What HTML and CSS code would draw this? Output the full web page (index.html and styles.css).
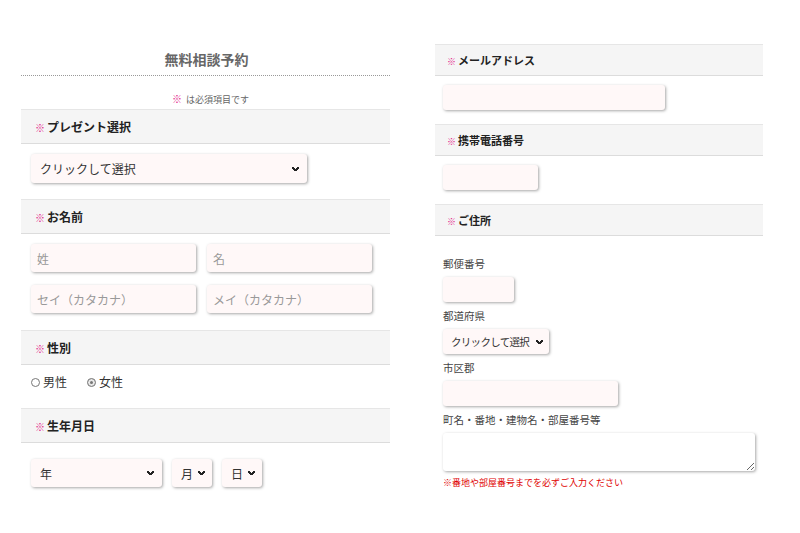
FILE: index.html
```html
<!DOCTYPE html>
<html lang="ja">
<head>
<meta charset="utf-8">
<link rel="stylesheet" href="styles.css">
</head>
<body>
<div class="page">
  <div class="col-left">
    <h1 class="title">無料相談予約</h1>
    <p class="note"><span class="req">※</span> は必須項目です</p>

    <div class="head"><span class="req">※</span>プレゼント選択</div>
    <div class="field f-present">
      <select class="sel sel-present"><option>クリックして選択</option></select>
    </div>

    <div class="head"><span class="req">※</span>お名前</div>
    <div class="field f-name">
      <div class="row"><input class="inp w-half" placeholder="姓"><input class="inp w-half" placeholder="名"></div>
      <div class="row"><input class="inp w-half" placeholder="セイ（カタカナ）"><input class="inp w-half" placeholder="メイ（カタカナ）"></div>
    </div>

    <div class="head"><span class="req">※</span>性別</div>
    <div class="field f-gender">
      <label class="radio"><input type="radio" name="g">男性</label>
      <label class="radio"><input type="radio" name="g" checked>女性</label>
    </div>

    <div class="head"><span class="req">※</span>生年月日</div>
    <div class="field f-birth">
      <select class="sel sel-year"><option>年</option></select>
      <select class="sel sel-md"><option>月</option></select>
      <select class="sel sel-md"><option>日</option></select>
    </div>
  </div>

  <div class="col-right">
    <div class="head head-r"><span class="req">※</span>メールアドレス</div>
    <div class="field-r">
      <input class="inp inp-r w-mail">
    </div>

    <div class="head head-r"><span class="req">※</span>携帯電話番号</div>
    <div class="field-r">
      <input class="inp inp-r w-tel">
    </div>

    <div class="head head-r"><span class="req">※</span>ご住所</div>
    <div class="field-addr">
      <label class="lbl">郵便番号</label>
      <input class="inp inp-r w-zip">
      <label class="lbl">都道府県</label>
      <select class="sel sel-r w-pref"><option>クリックして選択</option></select>
      <label class="lbl">市区郡</label>
      <input class="inp inp-r w-city">
      <label class="lbl">町名・番地・建物名・部屋番号等</label>
      <textarea class="area"></textarea>
      <p class="warn">※番地や部屋番号までを必ずご入力ください</p>
    </div>
  </div>
</div>
</body>
</html>
```

FILE: styles.css
```css
* { box-sizing: border-box; }
body {
  margin: 0;
  background: #fff;
  font-family: "Noto Sans CJK JP", "Noto Sans", sans-serif;
  color: #333;
}
.page {
  display: flex;
  align-items: flex-start;
  gap: 45px;
  padding-left: 21px;
}
.col-left { width: 369px; padding-top: 49px; }
.col-right { width: 328px; padding-top: 44px; }

.title {
  margin: 0;
  font-size: 14px;
  line-height: 20px;
  font-weight: bold;
  color: #666;
  text-align: center;
  padding-bottom: 6px;
  border-bottom: 1px dotted #999;
  padding-left: 2px;
}
.note {
  margin: 16px 0 2px;
  font-size: 9px;
  line-height: 14px;
  color: #666;
  text-align: center;
  padding-left: 10px;
}
.req { color: #e31c8a; font-size: 10px; margin-right: 2px; font-weight: normal; }

.head {
  height: 35px;
  line-height: 33px;
  background: #f5f5f5;
  border-top: 1px solid #e6e6e6;
  border-bottom: 1px solid #dcdcdc;
  padding-left: 14px;
  font-size: 12px;
  font-weight: bold;
  color: #222;
}
.head-r {
  height: 32px;
  line-height: 30px;
  padding-left: 12px;
  font-size: 11px;
}
.head-r .req { font-size: 9px; }

.inp, .sel, .area {
  font-family: inherit;
  border: none;
  border-radius: 3px;
  background-color: #fff8f8;
  box-shadow: 1px 1px 3px rgba(0, 0, 0, 0.35);
  color: #333;
  outline: none;
}
.inp {
  height: 28px;
  padding: 0 6px;
  font-size: 12px;
}
.inp::placeholder { color: #999; }
.sel {
  -webkit-appearance: none;
  appearance: none;
  height: 29px;
  font-size: 12px;
  padding: 0 20px 0 9px;
  background-image:
    linear-gradient(45deg, transparent 36%, #222 36%, #222 64%, transparent 64%),
    linear-gradient(135deg, transparent 36%, #222 36%, #222 64%, transparent 64%);
  background-repeat: no-repeat;
  background-size: 4px 4px, 4px 4px;
  background-position: right 11px center, right 8px center;
}

.field { padding: 10px 10px 16px; }
.sel-present { width: 276px; }
.f-name { padding-bottom: 17px; }
.row { display: flex; gap: 11px; }
.row + .row { margin-top: 13px; }
.w-half { width: 165px; }

.f-gender {
  display: flex;
  gap: 20px;
  padding: 8px 10px 17px;
  font-size: 12px;
  line-height: 18px;
  color: #333;
}
.radio { display: flex; align-items: center; }
.radio input {
  appearance: none;
  -webkit-appearance: none;
  width: 9px;
  height: 9px;
  margin: 0 3px 0 0;
  border: 1px solid #777;
  border-radius: 50%;
  background: #fff;
}
.radio input:checked {
  border-color: #888;
  background: #777;
  box-shadow: inset 0 0 0 2px #e8e8e8;
}

.f-birth { display: flex; gap: 10px; padding-top: 16px; }
.f-birth .sel { height: 28px; }
.sel-year { width: 131px; }
.sel-md { width: 40px; padding: 0 0 0 9px; background-position: right 10px center, right 7px center; }

.field-r { padding: 9px 8px 14px; }
.inp-r { height: 25px; display: block; }
.w-mail { width: 222px; }
.w-tel { width: 95px; }

.field-addr { padding: 21px 8px 0; }
.lbl {
  display: block;
  font-size: 10.5px;
  line-height: 14px;
  color: #444;
  margin-bottom: 6px;
}
.inp-r + .lbl, .sel-r + .lbl { margin-top: 7px; }
.w-zip { width: 71px; }
.sel-r {
  height: 25px;
  display: block;
  width: 106px;
  font-size: 10.5px;
  padding: 0 0 0 8px;
  letter-spacing: -0.7px;
  background-position: right 9px center, right 6px center;
}
.w-city { width: 175px; }
.area {
  display: block;
  width: 312px;
  height: 38px;
  background: #fff;
  resize: vertical;
}
.warn {
  margin: 5px 0 0;
  font-size: 9px;
  line-height: 14px;
  color: #e00000;
}
```
